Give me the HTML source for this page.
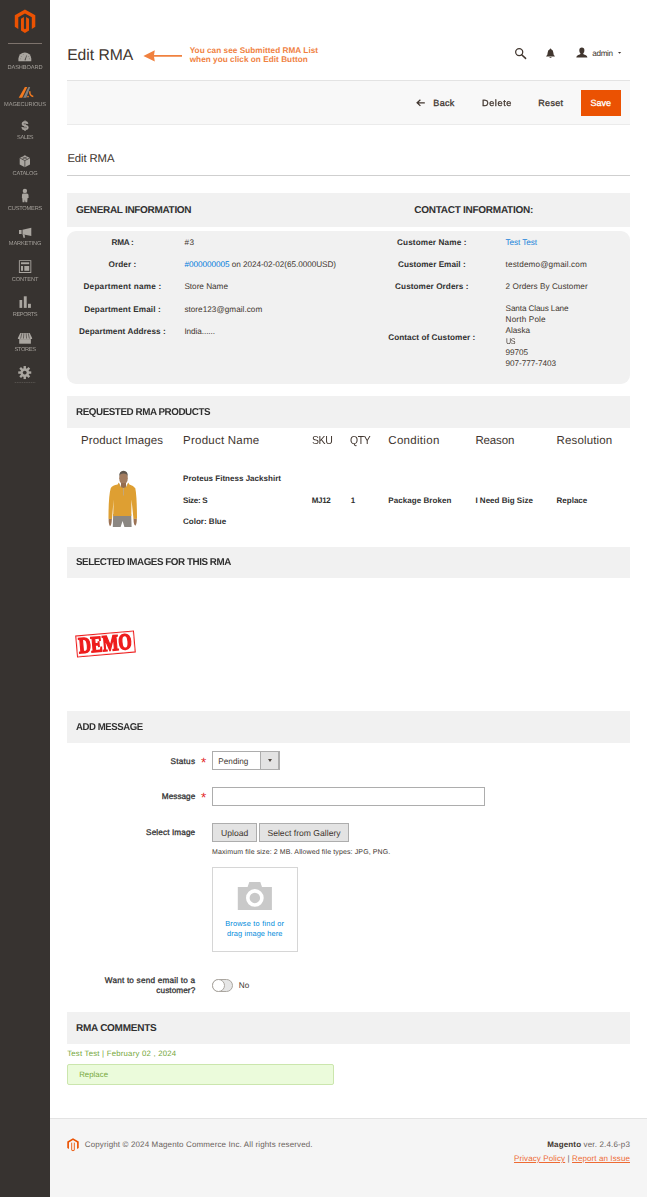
<!DOCTYPE html>
<html lang="en">
<head>
<meta charset="utf-8">
<title>Edit RMA</title>
<style>
*{box-sizing:border-box;margin:0;padding:0}
html,body{width:647px;height:1200px;overflow:hidden;background:#fff}
body{text-rendering:geometricPrecision;font-family:"Liberation Sans",sans-serif;color:#41362f;position:relative;font-size:8px}
.abs,.t{position:absolute;white-space:nowrap}
.t{line-height:12px}
a{color:#007bdb;text-decoration:none}
#side{position:absolute;left:0;top:0;width:50px;height:1197px;background:#373330}
#side .sep{position:absolute;left:8px;top:43px;width:34px;height:1px;background:#7d736c}
#side .it,#side .t{will-change:transform}
#side .it{position:absolute;left:0;width:50px;text-align:center;font-size:5.7px;line-height:8px;color:#a39f99;white-space:nowrap}
#side svg{position:absolute}
#title{left:67.2px;top:46.4px;font-size:15.7px;line-height:20px;color:#41362f}
.note{left:189.7px;font-size:8.2px;line-height:9px;color:#f0813f;font-weight:bold}
#bar{position:absolute;left:67px;top:80px;width:563px;height:45px;background:#f8f8f8;border-top:1px solid #e3e3e3;border-bottom:1px solid #ebebeb}
.btn{font-size:9px;font-weight:normal;-webkit-text-stroke:.3px currentColor;color:#41362f}
#save{position:absolute;left:580.8px;top:90.2px;width:40.2px;height:25.7px;background:#eb5202}
.sec{position:absolute;left:67px;width:563px;background:#f1f1f1}
.sec b{position:absolute;left:9px;font-size:10px;line-height:12px;color:#303030;white-space:nowrap}
.lab{font-size:8.2px;font-weight:bold;color:#303030;text-align:center}
.val{font-size:8.2px;color:#41362f}
.th{font-size:11.5px;line-height:14px;color:#41362f}
.td{font-size:8px;font-weight:bold;color:#303030}
.fl{font-size:8.2px;font-weight:normal;-webkit-text-stroke:.28px #303030;color:#303030;text-align:right}
.star{color:#e22626;font-size:13.5px;line-height:12px;width:8px;text-align:center}
.box{position:absolute;border:1px solid #adadad}
</style>
</head>
<body>
<!-- SIDEBAR -->
<div id="side">
  <svg style="left:0;top:0" width="50" height="400" viewBox="0 0 50 400">
    <!-- magento logo -->
    <g transform="translate(14.8 9.4)" fill="#eb5202"><path d="M10.15 0 L20.5 5.9 V17.3 L17 19.5 V7.9 L10.15 4 L3.5 7.9 V19.5 L0 17.3 V5.9 Z"/><path d="M6.2 9.3 L9.1 7.7 V19.2 L10.15 19.9 L11.3 19.2 V7.7 L14.2 9.3 V21 L10.15 23.5 L6.2 21 Z"/></g>
    <g fill="#aaa6a0">
    <!-- dashboard -->
    <path d="M18.4 61.2 V58.85 A6.45 6.45 0 0 1 31.3 58.85 V61.2 Z"/>
    <path d="M24.5 60.2 L26.4 55.2 L26.9 55.4 L25.5 60.4 Z" fill="#373330" opacity=".85"/>
    <g fill="#373330" opacity=".7"><circle cx="20.3" cy="58.8" r=".4"/><circle cx="21.2" cy="56.3" r=".4"/><circle cx="23.2" cy="54.6" r=".4"/><circle cx="28.7" cy="56.3" r=".4"/><circle cx="29.5" cy="58.8" r=".4"/></g>
    <!-- magecurious -->
    <path d="M18.7 97.7 L24.9 86.9 H27.3 L22.2 97.7 Z" fill="#f47b20"/>
    <path d="M23.2 97.7 L28.5 86.9 H30.2 L26.3 97.7 Z" fill="#808080"/>
    <path d="M30 91.3 A3.9 3.9 0 0 0 33.3 96.5" fill="none" stroke="#f47b20" stroke-width="1.5"/>
    <circle cx="28" cy="96.6" r=".85" fill="#f47b20"/>
    <!-- catalog cube -->
    <path d="M24.85 155.3 L30 157.9 V164.5 L24.85 167.2 L19.7 164.5 V157.9 Z"/>
    <path d="M19.7 157.9 L24.85 160.6 L30 157.9 M24.85 160.6 V167.2" stroke="#373330" stroke-width=".7" fill="none"/>
    <path d="M22.3 156.6 L27.5 159.3 M27.4 156.6 L22.2 159.3" stroke="#373330" stroke-width=".6" fill="none"/>
    <!-- customers -->
    <circle cx="24.9" cy="190.9" r="2.2"/>
    <path d="M22.9 193.4 H26.9 Q28.4 193.4 28.5 195 L28.6 198 H27.6 L27.2 202.2 H25.4 L24.9 199.5 L24.4 202.2 H22.6 L22.2 198 H21.9 L22 195 Q22.1 193.4 22.9 193.4 Z"/>
    <!-- marketing megaphone -->
    <path d="M31.3 227.7 V236 L22.5 234.2 V229.8 Z"/>
    <path d="M19 230 H21.6 V234 H19 Z"/>
    <path d="M22.6 234 L24.6 234.5 L25 237.7 H23.4 Z"/>
    <!-- content -->
    <path d="M18.9 260.2 H31.3 V272.9 H18.9 Z M19.8 261.1 V272 H30.4 V261.1 Z" fill-rule="evenodd"/>
    <rect x="21" y="262.3" width="8.2" height="1.9"/><rect x="21" y="266" width="2" height="4.8"/><rect x="24.3" y="266" width="4.9" height="4.8"/>
    <!-- reports -->
    <rect x="19.5" y="300" width="2.7" height="7.9"/><rect x="23.8" y="296.3" width="2.9" height="11.6"/><rect x="28" y="303.8" width="2.9" height="4.1"/>
    <!-- stores -->
    <path d="M20.3 332.9 H29.7 L32.1 338 V339.1 H17.9 V338 Z"/>
    <path d="M21.8 333.2 L20.6 338.6 M23.9 333.2 L23.4 338.6 M26.1 333.2 L26.6 338.6 M28.2 333.2 L29.4 338.6" stroke="#373330" stroke-width=".6" fill="none"/>
    <rect x="19.2" y="339.1" width="11.7" height="4.6"/>
    <!-- system gear -->
    <g transform="translate(24.75 372.55)"><circle r="4.4"/><g id="tth"><rect x="-1.2" y="-6.5" width="2.4" height="13"/><rect x="-6.5" y="-1.2" width="13" height="2.4"/></g><g transform="rotate(45)"><rect x="-1.2" y="-6.5" width="2.4" height="13"/><rect x="-6.5" y="-1.2" width="13" height="2.4"/></g><circle r="1.9" fill="#373330"/></g>
    <path d="M14.7 382.6 H35.7" stroke="#aaa6a0" stroke-width=".5" stroke-dasharray="1.6 .7" opacity=".55"/>
    </g>
  </svg>
  <div class="t" style="left:0;width:50px;text-align:center;top:119.3px;font-size:12.6px;line-height:14px;font-weight:bold;color:#aaa6a0;-webkit-text-stroke:.35px #aaa6a0">$</div>
  <div class="sep"></div>
  <div class="it" style="top:64.3px"><span style="letter-spacing:-0.13px;">DASHBOARD</span></div>
  <div class="it" style="top:100.8px"><span style="letter-spacing:-0.10px;">MAGECURIOUS</span></div>
  <div class="it" style="top:134.3px"><span style="letter-spacing:-0.45px;display:inline-block;transform:scaleX(0.985);transform-origin:center center;">SALES</span></div>
  <div class="it" style="top:169.8px"><span style="letter-spacing:-0.22px;">CATALOG</span></div>
  <div class="it" style="top:205.3px"><span style="letter-spacing:-0.22px;">CUSTOMERS</span></div>
  <div class="it" style="top:240.4px"><span style="letter-spacing:-0.16px;">MARKETING</span></div>
  <div class="it" style="top:276.2px"><span style="letter-spacing:-0.15px;">CONTENT</span></div>
  <div class="it" style="top:310.6px"><span style="letter-spacing:-0.42px;">REPORTS</span></div>
  <div class="it" style="top:346.2px"><span style="letter-spacing:-0.36px;">STORES</span></div>
</div>

<!-- HEADER -->
<div class="t" id="title"><span style="letter-spacing:-0.04px;">Edit RMA</span></div>
<svg class="abs" style="left:142px;top:48px" width="42" height="16" viewBox="142 48 42 16"><path d="M143.4 55.9 L154.8 50.3 L154 55.1 H182 V56.7 H154 L154.8 61.5 Z" fill="#f0813f"/></svg>
<div class="t note" style="top:46.4px"><span style="letter-spacing:0.05px;">You can see Submitted RMA List</span></div>
<div class="t note" style="top:55.4px"><span style="letter-spacing:0.04px;">when you click on Edit Button</span></div>

<!-- header icons -->
<svg class="abs" style="left:505px;top:38px" width="130" height="32" viewBox="505 38 130 32">
  <circle cx="519.2" cy="52.1" r="3.55" fill="none" stroke="#41362f" stroke-width="1.25"/>
  <path d="M521.7 54.7 L525.6 58.4" stroke="#41362f" stroke-width="1.5" stroke-linecap="round"/>
  <path d="M550.5 48.4 Q551.2 48.4 551.2 49.2 Q553.3 49.9 553.3 52.6 Q553.3 55 554.8 56 V56.4 H546.2 V56 Q547.7 55 547.7 52.6 Q547.7 49.9 549.8 49.2 Q549.8 48.4 550.5 48.4 Z M549.4 56.9 H551.6 Q551.4 57.8 550.5 57.8 Q549.6 57.8 549.4 56.9 Z" fill="#41362f"/>
  <path d="M581.85 47.6 Q584.4 47.6 584.4 50.4 Q584.4 52.3 583.3 53.3 V54.1 Q583.6 54.6 585.4 55.1 Q587.4 55.7 587.4 57.5 H576.3 Q576.3 55.7 578.3 55.1 Q580.1 54.6 580.4 54.1 V53.3 Q579.3 52.3 579.3 50.4 Q579.3 47.6 581.85 47.6 Z" fill="#41362f"/>
  <path d="M618 52 H621.2 L619.6 53.8 Z" fill="#41362f"/>
</svg>
<div class="t" style="left:592.2px;top:47.5px;font-size:8.2px;color:#41362f"><span style="letter-spacing:-0.33px;">admin</span></div>

<div id="bar"></div>
<svg class="abs" style="left:415px;top:98px" width="12" height="10" viewBox="415 98 12 10"><path d="M424.8 102.8 H417.6 M420.4 99.7 L417.1 102.8 L420.4 105.9" fill="none" stroke="#41362f" stroke-width="1.25" stroke-linejoin="miter"/></svg>
<div class="t btn" style="left:433.3px;top:96.5px"><span style="letter-spacing:0.33px;">Back</span></div>
<div class="t btn" style="left:481.8px;top:96.5px"><span style="letter-spacing:0.60px;display:inline-block;transform:scaleX(1.013);transform-origin:left center;">Delete</span></div>
<div class="t btn" style="left:538.2px;top:96.5px"><span style="letter-spacing:0.35px;">Reset</span></div>
<div id="save"></div>
<div class="t btn" style="left:590.6px;top:96.5px;color:#fff"><span style="letter-spacing:-0.04px;">Save</span></div>

<!-- SUBTITLE -->
<div class="t" style="left:67.4px;top:152.2px;font-size:11.3px;line-height:14px;color:#41362f"><span style="letter-spacing:-0.09px;">Edit RMA</span></div>
<div class="abs" style="left:67px;top:175px;width:563px;height:1px;background:#cfcfcf"></div>

<!-- GENERAL / CONTACT -->
<div class="sec" style="top:193px;height:34px"><b style="letter-spacing:-0.32px;top:11.5px">GENERAL INFORMATION</b><b style="letter-spacing:-0.26px;top:11.5px;left:347.2px">CONTACT INFORMATION:</b></div>
<div class="abs" style="left:67px;top:231px;width:563px;height:153px;background:#f1f1f1;border-radius:9px"></div>

<div class="t lab" style="left:67.5px;width:110px;top:236.9px"><span style="letter-spacing:-0.29px;">RMA :</span></div>
<div class="t lab" style="left:67.5px;width:110px;top:259.1px"><span style="letter-spacing:0.08px;">Order :</span></div>
<div class="t lab" style="left:67.5px;width:110px;top:281.3px"><span style="letter-spacing:0.23px;">Department name :</span></div>
<div class="t lab" style="left:67.5px;width:110px;top:303.5px"><span style="letter-spacing:0.11px;">Department Email :</span></div>
<div class="t lab" style="left:67.5px;width:110px;top:325.7px"><span style="letter-spacing:0.08px;">Department Address :</span></div>
<div class="t val" style="left:184.4px;top:236.9px"><span style="letter-spacing:0.49px;">#3</span></div>
<div class="t val" style="left:184.4px;top:259.1px"><span style="letter-spacing:-0.05px;"><a>#000000005</a> on 2024-02-02(65.0000USD)</span></div>
<div class="t val" style="left:184.4px;top:281.3px"><span style="letter-spacing:-0.01px;">Store Name</span></div>
<div class="t val" style="left:184.4px;top:303.5px"><span style="letter-spacing:0.02px;">store123@gmail.com</span></div>
<div class="t val" style="left:184.4px;top:325.7px"><span style="letter-spacing:-0.08px;">India......</span></div>

<div class="t lab" style="left:376.8px;width:110px;top:236.9px"><span style="letter-spacing:0.12px;">Customer Name :</span></div>
<div class="t lab" style="left:376.8px;width:110px;top:259.1px"><span style="letter-spacing:0.02px;">Customer Email :</span></div>
<div class="t lab" style="left:376.8px;width:110px;top:281.3px"><span style="letter-spacing:0.06px;">Customer Orders :</span></div>
<div class="t lab" style="left:376.8px;width:110px;top:332.2px"><span style="letter-spacing:0.06px;">Contact of Customer :</span></div>
<div class="t val" style="left:505.6px;top:236.9px"><a style="letter-spacing:-0.08px;color:#1a84da">Test Test</a></div>
<div class="t val" style="left:505.6px;top:259.1px"><span style="letter-spacing:0.11px;">testdemo@gmail.com</span></div>
<div class="t val" style="left:505.6px;top:281.3px"><span style="letter-spacing:0.03px;">2 Orders By Customer</span></div>
<div class="t val" style="left:505.6px;top:304.2px;line-height:10.92px"><span style="letter-spacing:-0.14px;">Santa Claus Lane</span><br><span style="letter-spacing:0.15px;">North Pole</span><br><span style="letter-spacing:-0.02px;">Alaska</span><br><span style="letter-spacing:-0.45px;display:inline-block;transform:scaleX(0.870);transform-origin:left center;">US</span><br><span style="letter-spacing:-0.07px;">99705</span><br><span style="letter-spacing:-0.05px;">907-777-7403</span></div>

<!-- PRODUCTS -->
<div class="sec" style="top:396.3px;height:31.3px"><b style="letter-spacing:-0.45px;display:inline-block;transform:scaleX(0.983);transform-origin:left center;top:10.5px">REQUESTED RMA PRODUCTS</b></div>
<div class="t th" style="left:81.1px;top:434px"><span style="letter-spacing:0.11px;">Product Images</span></div>
<div class="t th" style="left:183.1px;top:434px"><span style="letter-spacing:0.23px;">Product Name</span></div>
<div class="t th" style="left:311.5px;top:434px"><span style="letter-spacing:-0.45px;display:inline-block;transform:scaleX(0.914);transform-origin:left center;">SKU</span></div>
<div class="t th" style="left:350px;top:434px"><span style="letter-spacing:-0.45px;display:inline-block;transform:scaleX(0.906);transform-origin:left center;">QTY</span></div>
<div class="t th" style="left:388.3px;top:434px"><span style="letter-spacing:0.30px;">Condition</span></div>
<div class="t th" style="left:475.4px;top:434px"><span style="letter-spacing:-0.13px;">Reason</span></div>
<div class="t th" style="left:556.6px;top:434px"><span style="letter-spacing:0.14px;">Resolution</span></div>

<svg class="abs" style="left:104px;top:468px" width="38" height="62" viewBox="104 468 38 62">
 <defs><filter id="bl" x="-10%" y="-10%" width="120%" height="120%"><feGaussianBlur stdDeviation=".45"/></filter></defs>
 <g filter="url(#bl)">
  <path d="M113.2 514 H131.2 L131.6 527 H124.4 L122.6 521 L120.6 527 H112.8 Z" fill="#8b8782"/>
  <path d="M108.7 518.5 Q108.4 524 110 526.2 Q111.6 525.5 111.9 518.7 Z M136.8 518.3 Q137 523.5 135.4 525.8 Q133.6 525 133.5 518.7 Z" fill="#9c7355"/>
  <ellipse cx="123.5" cy="478.2" rx="4.3" ry="6.2" fill="#a27c5f"/>
  <path d="M119.2 476.5 Q119 471 123.5 470.8 Q128 471 127.8 476.5 Q127 473.5 123.5 473.5 Q120 473.5 119.2 476.5 Z" fill="#5f574d"/>
  <path d="M121 483 H126 V488 H121 Z" fill="#946c50"/>
  <path d="M118.8 482.6 L120.3 486.6 L123.5 488.6 L126.7 486.6 L128.2 482.6 L129.4 484.6 Q133.5 485.6 135.3 488.2 Q136.9 496 137 518.4 L133.5 518.9 L131.5 499.5 L131.3 516 H113.2 L113.6 499.5 L112 518.9 L108.5 518.7 Q108.4 496 110.8 488 Q112.5 485.6 117.6 484.6 Z" fill="#de9f30"/>
  <path d="M123.2 488.2 H123.9 V495.5 H123.2 Z" fill="#b9ab98"/>
  <path d="M119.2 483.6 L120.4 486.4 L123.5 488 L126.6 486.4 L127.8 483.6" fill="none" stroke="#b28a4a" stroke-width=".6"/>
 </g>
</svg>
<div class="t td" style="left:183.1px;top:472.7px"><span style="letter-spacing:0.02px;">Proteus Fitness Jackshirt</span></div>
<div class="t td" style="left:183.1px;top:494.6px"><span style="letter-spacing:-0.27px;">Size: S</span></div>
<div class="t td" style="left:183.1px;top:515.5px"><span style="letter-spacing:-0.00px;">Color: Blue</span></div>
<div class="t td" style="left:311.8px;top:494.6px"><span style="letter-spacing:-0.34px;">MJ12</span></div>
<div class="t td" style="left:350.8px;top:494.6px">1</div>
<div class="t td" style="left:388.3px;top:494.6px"><span style="letter-spacing:0.06px;">Package Broken</span></div>
<div class="t td" style="left:475.4px;top:494.6px"><span style="letter-spacing:0.01px;">I Need Big Size</span></div>
<div class="t td" style="left:556.6px;top:494.6px"><span style="letter-spacing:-0.01px;">Replace</span></div>

<!-- SELECTED IMAGES -->
<div class="sec" style="top:546.5px;height:31.2px"><b style="letter-spacing:-0.45px;display:inline-block;transform:scaleX(0.980);transform-origin:left center;top:10.3px">SELECTED IMAGES FOR THIS RMA</b></div>

<div class="abs" style="left:75.8px;top:632.7px;width:59.3px;height:22.2px;border:1.1px solid #ee1c1c;transform:rotate(-4.9deg);box-shadow:inset 0 0 0 .4px rgba(238,28,28,.35)"></div>
<div class="abs" style="left:66px;top:629.8px;width:79px;height:28px;text-align:center;transform:rotate(-4.9deg)"><span style="display:inline-block;font-family:'Liberation Serif',serif;font-weight:bold;font-size:22.6px;line-height:28px;color:#ee1c1c;-webkit-text-stroke:1.5px #ee1c1c;transform:scaleX(.755);transform-origin:center center">DEMO</span></div>

<!-- ADD MESSAGE -->
<div class="sec" style="top:710.9px;height:31.7px"><b style="letter-spacing:-0.45px;display:inline-block;transform:scaleX(0.959);transform-origin:left center;top:10.9px">ADD MESSAGE</b></div>
<div class="t fl" style="left:67px;width:128.3px;top:755.9px"><span style="letter-spacing:0.28px;">Status</span></div>
<div class="t star" style="left:199.6px;top:756.7px">*</div>
<div class="box" style="left:212px;top:751px;width:67.5px;height:19px;background:#fff"></div>
<div class="box" style="left:260.3px;top:751px;width:19.2px;height:19px;background:#e3e3e3"></div>
<div class="t val" style="left:218.3px;top:755.8px"><span style="letter-spacing:0.01px;">Pending</span></div>
<div class="abs" style="left:267.7px;top:759.3px;width:0;height:0;border-left:2.2px solid transparent;border-right:2.2px solid transparent;border-top:3px solid #514943"></div>

<div class="t fl" style="left:67px;width:128.3px;top:790.5px"><span style="letter-spacing:0.03px;">Message</span></div>
<div class="t star" style="left:199.6px;top:791.6px">*</div>
<div class="box" style="left:212px;top:787px;width:273px;height:19px;background:#fff"></div>

<div class="t fl" style="left:67px;width:128.3px;top:827.1px"><span style="letter-spacing:0.12px;">Select Image</span></div>
<div class="box" style="left:212px;top:823px;width:45px;height:19px;background:#e3e3e3"></div>
<div class="box" style="left:259px;top:823px;width:90px;height:19px;background:#e3e3e3"></div>
<div class="t" style="left:221.1px;top:826.5px;font-size:8.6px;color:#41362f"><span style="letter-spacing:0.01px;">Upload</span></div>
<div class="t" style="left:267.4px;top:826.5px;font-size:8.6px;color:#41362f"><span style="letter-spacing:0.01px;">Select from Gallery</span></div>
<div class="t" style="left:212px;top:847.2px;font-size:7px;color:#41362f"><span style="letter-spacing:0.12px;">Maximum file size: 2 MB. Allowed file types: JPG, PNG.</span></div>
<div class="abs" style="left:212px;top:866.5px;width:86px;height:85.5px;border:1px solid #d6d6d6;background:#fff"></div>
<svg class="abs" style="left:237px;top:881px" width="36" height="30" viewBox="237 881 36 30"><path d="M237.8 887 H247.6 L249.3 882.1 H260.3 L262 887 H271.9 V909.9 H237.8 Z" fill="#c9c9c9"/><circle cx="254.85" cy="897.9" r="7.05" fill="none" stroke="#fff" stroke-width="3.6"/></svg>
<div class="t" style="left:225.2px;top:917.7px;font-size:7.4px;color:#008bdb"><span style="letter-spacing:0.21px;">Browse to find or</span></div>
<div class="t" style="left:227.1px;top:927.5px;font-size:7.4px;color:#008bdb"><span style="letter-spacing:0.10px;">drag image here</span></div>

<div class="t fl" style="left:67px;width:128.3px;top:975.2px"><span style="letter-spacing:0.21px;">Want to send email to a</span></div>
<div class="t fl" style="left:67px;width:128.3px;top:984.9px"><span style="letter-spacing:0.08px;">customer?</span></div>
<div class="abs" style="left:211.8px;top:978.8px;width:21.4px;height:13.2px;border:1px solid #aaa6a0;border-radius:7px;background:#e6e6e6"></div>
<div class="abs" style="left:211.8px;top:978.8px;width:13.2px;height:13.2px;border:1px solid #aaa6a0;border-radius:7px;background:#fff"></div>
<div class="t val" style="left:238.7px;top:979.7px"><span style="letter-spacing:0.23px;">No</span></div>

<!-- COMMENTS -->
<div class="sec" style="top:1011.8px;height:32.2px"><b style="letter-spacing:-0.26px;top:11.2px">RMA COMMENTS</b></div>
<div class="t" style="left:67.2px;top:1047.9px;font-size:7.8px;color:#76a83c"><span style="letter-spacing:0.21px;">Test Test | February 02 , 2024</span></div>
<div class="abs" style="left:67px;top:1064px;width:267px;height:20.5px;border:1px solid #cbe6ad;border-radius:2px;background:#ebfbdb"></div>
<div class="t" style="left:79.2px;top:1068.7px;font-size:7.8px;color:#76a83c"><span style="letter-spacing:0.03px;">Replace</span></div>

<!-- FOOTER -->
<div class="abs" style="left:50px;top:1118.3px;width:597px;height:78.9px;background:#f5f5f5;border-top:1px solid #e3e3e3"></div>
<svg class="abs" style="left:67px;top:1138px" width="12" height="13.5" viewBox="0 0 21 23"><path d="M10.5 0 L20.5 5.7 V17.2 L17.6 18.9 V7.4 L10.5 3.3 L3.4 7.4 V18.9 L0.5 17.2 V5.7 Z" fill="#eb5202"/><path d="M7.5 8.2 V21.2 L10.5 23 L13.5 21.2 V8.2 L12 7.4 V20.2 L10.5 21.1 L9 20.2 V7.4 Z" fill="#eb5202"/></svg>
<div class="t" style="left:84.8px;top:1139.1px;font-size:8px;color:#6a625c"><span style="letter-spacing:0.13px;">Copyright © 2024 Magento Commerce Inc. All rights reserved.</span></div>
<div class="t" style="left:430px;width:200px;text-align:right;top:1139.1px;font-size:8px;color:#6a625c"><span style="letter-spacing:0.15px;"><b style="color:#41362f">Magento</b> ver. 2.4.6-p3</span></div>
<div class="t" style="left:430px;width:200px;text-align:right;top:1153.1px;font-size:8px;color:#6a625c"><span style="letter-spacing:0.10px;"><a style="color:#ee6a33;text-decoration:underline;text-decoration-thickness:.6px;text-underline-offset:1px">Privacy Policy</a> | <a style="color:#ee6a33;text-decoration:underline;text-decoration-thickness:.6px;text-underline-offset:1px">Report an Issue</a></span></div>

</body>
</html>
